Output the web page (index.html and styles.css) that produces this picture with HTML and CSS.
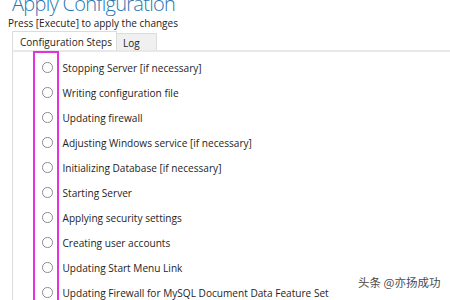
FILE: index.html
```html
<!DOCTYPE html>
<html>
<head>
<meta charset="utf-8">
<link rel="stylesheet" href="styles.css">
</head>
<body>
<div class="page">
  <h1 class="title">Apply Configuration</h1>
  <p class="subtitle">Press [Execute] to apply the changes</p>
  <div class="tabs">
    <div class="tab tab-active">Configuration Steps</div>
    <div class="tab tab-inactive">Log</div>
  </div>
  <div class="panel">
    <div class="highlight"></div>
    <ul class="steps">
      <li class="step"><span class="radio"></span><span class="label">Stopping Server [if necessary]</span></li>
      <li class="step"><span class="radio"></span><span class="label">Writing configuration file</span></li>
      <li class="step"><span class="radio"></span><span class="label">Updating firewall</span></li>
      <li class="step"><span class="radio"></span><span class="label">Adjusting Windows service [if necessary]</span></li>
      <li class="step"><span class="radio"></span><span class="label">Initializing Database [if necessary]</span></li>
      <li class="step"><span class="radio"></span><span class="label">Starting Server</span></li>
      <li class="step"><span class="radio"></span><span class="label">Applying security settings</span></li>
      <li class="step"><span class="radio"></span><span class="label">Creating user accounts</span></li>
      <li class="step"><span class="radio"></span><span class="label">Updating Start Menu Link</span></li>
      <li class="step"><span class="radio"></span><span class="label">Updating Firewall for MySQL Document Data Feature Set</span></li>
    </ul>
  </div>
  <div class="watermark">头条 @亦扬成功</div>
</div>
</body>
</html>
```

FILE: styles.css
```css
html, body {
  margin: 0;
  padding: 0;
  background: #ffffff;
  overflow: hidden;
}
.page {
  position: relative;
  width: 450px;
  height: 300px;
  overflow: hidden;
  font-family: "Open Sans", "Noto Sans", sans-serif;
  color: #1e1e1e;
}
.title {
  margin: -8px 0 0 12px;
  font-size: 20px;
  font-weight: 300;
  line-height: 24px;
  color: #2a78b2;
  letter-spacing: -0.7px;
}
.subtitle {
  margin: -1px 0 0 8px;
  font-size: 10px;
  line-height: 16px;
  color: #222;
}
.tabs {
  display: flex;
  align-items: flex-end;
  margin-left: 12px;
  height: 19px;
}
.tab {
  font-size: 10px;
  line-height: 16px;
  box-sizing: border-box;
  white-space: nowrap;
}
.tab-active {
  height: 19px;
  padding: 2px 6px 0 7px;
  border: 1px solid #dcdcdc;
  border-bottom: none;
  background: #fff;
  width: 105px;
}
.tab-inactive {
  height: 17px;
  padding: 1px 6px 0 6px;
  border: 1px solid #dcdcdc;
  border-left: none;
  border-bottom: none;
  background: #f0f0f0;
  width: 40px;
}
.panel {
  position: relative;
  margin-left: 12px;
  border-top: 2px solid #e8e8e8;
  border-left: 1px solid #dcdcdc;
  height: 260px;
}
.highlight {
  position: absolute;
  left: 20px;
  top: -1px;
  width: 22px;
  height: 300px;
  border: 2px solid #e233e0;
}
.steps {
  list-style: none;
  margin: 0;
  padding: 3px 0 0 29px;
}
.step {
  display: flex;
  align-items: center;
  height: 25px;
  font-size: 10.1px;
}
.radio {
  width: 8.5px;
  height: 8.5px;
  border: 1.2px solid #8c8c8c;
  border-radius: 50%;
  background: #fff;
  flex: none;
}
.label {
  margin-left: 10px;
  white-space: nowrap;
}
.watermark {
  position: absolute;
  left: 358px;
  top: 274px;
  font-family: "Noto Sans CJK SC", sans-serif;
  font-size: 11.5px;
  color: #4a4a4a;
}
```
